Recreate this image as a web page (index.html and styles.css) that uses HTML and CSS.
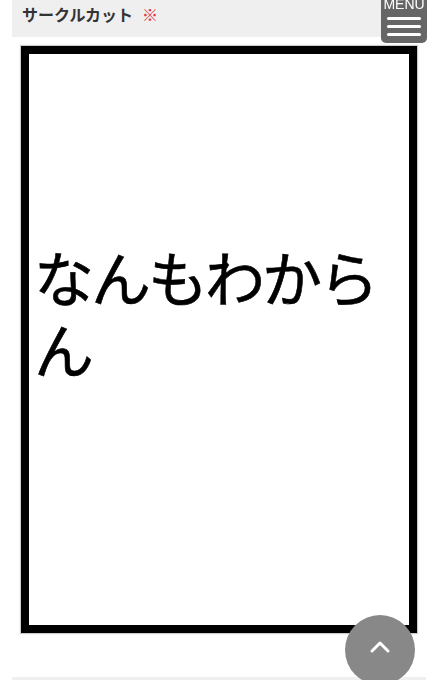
FILE: index.html
```html
<!DOCTYPE html>
<html lang="ja">
<head>
<meta charset="utf-8">
<link rel="stylesheet" href="styles.css">
</head>
<body>
<div class="page">
  <div class="sec-head"><span class="sec-title">サークルカット</span><span class="mark">※</span></div>
  <div class="cut">
    <div class="cut-text">なんもわからん</div>
  </div>
  <div class="next-head"></div>
</div>
<button class="menu-btn">
  <span class="menu-label">MENU</span>
  <span class="bar"></span><span class="bar"></span><span class="bar"></span>
</button>
<button class="top-btn">
  <svg width="22" height="14" viewBox="0 0 22 14"><path d="M3 11 L11 3 L19 11" fill="none" stroke="#fff" stroke-width="3" stroke-linecap="round" stroke-linejoin="round"/></svg>
</button>
</body>
</html>
```
FILE: styles.css
```css
html, body { margin: 0; padding: 0; background: #fff; }
body { font-family: "Noto Sans CJK JP", "Noto Sans", sans-serif; overflow: hidden; height: 680px; }
.page { padding: 0 12px; }
.sec-head {
  height: 37px; background: #efefef; display: flex; align-items: center;
  padding-left: 10px; gap: 9px; padding-bottom: 9px; box-sizing: border-box;
}
.sec-title { font-size: 16px; font-weight: 700; color: #333; letter-spacing: 0; }
.mark { font-size: 16px; color: #e0343a; font-weight: 500; }
.cut {
  margin: 9px 0 0 9px; width: 396px; height: 587px; box-sizing: border-box;
  border: 8px solid #000; background: #fff; box-shadow: 0 0 1px 1px #ccc;
  padding: 186px 0 0 5px;
}
.cut-text { font-size: 60px; line-height: 72px; letter-spacing: -3px; font-weight: 400; color: #000; width: 370px; -webkit-text-stroke: 0.6px #000; }
.next-head { margin-top: 44px; height: 10px; background: #efefef; }
.menu-btn {
  position: fixed; top: -4px; left: 381px; width: 46px; height: 47px;
  background: #666; border: 0; border-radius: 5px; padding: 0;
  display: flex; flex-direction: column; align-items: center;
}
.menu-label { color: #fff; font-family: "Liberation Sans", Arial, sans-serif; font-size: 14px; line-height: 16px; }
.bar { display: block; width: 34px; height: 3px; background: #fff; border-radius: 2px; margin-top: 5px; }
.top-btn {
  position: fixed; left: 345px; top: 615px; width: 70px; height: 70px;
  border-radius: 50%; background: #888; border: 0; padding: 0;
  display: flex; align-items: center; justify-content: center; padding-bottom: 6px;
}
```
